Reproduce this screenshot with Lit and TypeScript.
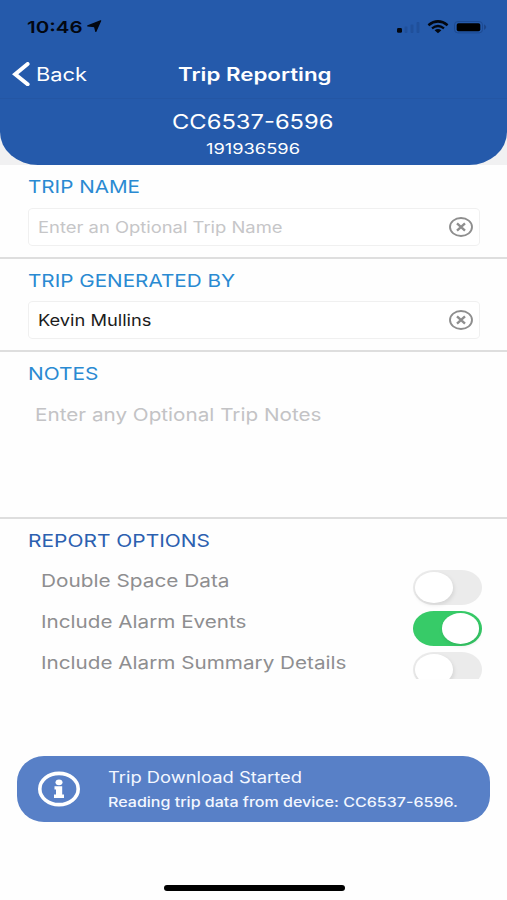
import { LitElement, html, css, svg } from "lit";
import { customElement, property, query } from "lit/decorators.js";

/** A single line of text set wide, stretched to an exact measure. */
@customElement("wide-text")
class WideText extends LitElement {
  @property({ type: Number }) measure = 100;
  @query(".run") run!: HTMLElement;

  static styles = css`
    :host {
      display: block;
      flex: none;
      white-space: nowrap;
    }
    .run {
      display: inline-block;
      transform-origin: 0 50%;
    }
  `;

  render() {
    return html`<span class="run"><slot></slot></span>`;
  }

  updated() {
    this.style.width = `${this.measure}px`;
    this.run.style.transform = "none";
    const natural = this.run.getBoundingClientRect().width;
    if (natural > 0) this.run.style.transform = `scaleX(${this.measure / natural})`;
  }
}

const clearIcon = svg`
  <svg class="clear" width="26" height="22" viewBox="0 0 26 22">
    <ellipse cx="13" cy="11" rx="11" ry="9" fill="none" stroke="#8e8e8e" stroke-width="1.9" />
    <path d="M9 7.4 17 14.6M17 7.4 9 14.6" stroke="#8e8e8e" stroke-width="2.4" />
  </svg>`;

@customElement("app-root")
class AppRoot extends LitElement {
  options = [
    { label: "Double Space Data", measure: 188.5, on: false },
    { label: "Include Alarm Events", measure: 205.5, on: true },
    { label: "Include Alarm Summary Details", measure: 305.5, on: false },
  ];

  static styles = css`
    :host {
      display: block;
      width: 507px;
      height: 900px;
      overflow: hidden;
      background: #fefefe;
      font-family: Inter, "Liberation Sans", sans-serif;
      font-size: 17.6px;
      line-height: 24px;
    }
    * {
      box-sizing: border-box;
    }
    .screen {
      display: flex;
      flex-direction: column;
      height: 900px;
    }
    .top {
      background: #f1f1f2;
      height: 165px;
    }
    header {
      height: 164.5px;
      background: #255aab;
      color: #fff;
      border-radius: 0 0 38px 38px / 0 0 33px 33px;
    }
    .status {
      height: 53px;
      display: flex;
      align-items: center;
      padding: 0 19px 0 27px;
      color: #030710;
      font-size: 16.6px;
      font-weight: 600;
    }
    .arrow {
      margin-left: 4px;
    }
    .signals {
      margin-left: auto;
    }
    .nav {
      height: 46px;
      padding: 0 12px 4px;
      border-bottom: 1px solid #2456a4;
      display: grid;
      grid-template-columns: 165.5px 1fr;
      align-items: center;
      font-size: 18.4px;
    }
    .back {
      display: flex;
      align-items: center;
      gap: 5.5px;
    }
    .title {
      font-weight: 600;
    }
    .device {
      height: 37px;
      padding-top: 8px;
      display: flex;
      align-items: center;
      justify-content: center;
      font-size: 19.8px;
    }
    .device,
    .serial {
      padding-right: 1px;
    }
    .serial {
      height: 25px;
      display: flex;
      align-items: center;
      justify-content: center;
      font-size: 14px;
    }
    section {
      border-bottom: 2px solid #dedede;
      padding: 0 27px 0 28px;
    }
    .heading {
      height: 42px;
      display: flex;
      align-items: center;
      color: #2a8ad2;
    }
    .name,
    .by {
      height: 93px;
    }
    .name {
      height: 94px;
    }
    .name .heading,
    .notes .heading {
      height: 43px;
    }
    .by .heading,
    .report .heading {
      padding-top: 1px;
    }
    .notes {
      height: 167px;
    }
    .report {
      border: 0;
      height: 160px;
      padding-right: 25px;
    }
    .report .heading {
      color: #2c60b0;
    }
    .field {
      height: 38px;
      border: 1px solid #f0f0f0;
      border-radius: 5px / 4px;
      display: flex;
      align-items: center;
      justify-content: space-between;
      padding: 1px 5px 0 8.5px;
      font-size: 15.8px;
      color: #1c1c1c;
      background: #fff;
    }
    .clear {
      margin-bottom: 1px;
    }
    .hint {
      color: #c6c6c8;
    }
    .memo {
      height: 40px;
      display: flex;
      align-items: center;
      padding-left: 6.5px;
      font-size: 17.8px;
      color: #c3c3c5;
    }
    .list {
      height: 118px;
      overflow: hidden;
    }
    .option {
      height: 41px;
      display: flex;
      justify-content: space-between;
      padding: 0 0 0 13px;
      line-height: 40px;
      color: #8e8e90;
    }
    .toggle {
      width: 69px;
      height: 34.5px;
      margin: 9px 0.5px 0 0;
      border-radius: 21px / 17.25px;
      padding: 2px 2.5px;
      background: #ebebeb;
      display: flex;
      flex: none;
    }
    .toggle.on {
      background: #37cb68;
      justify-content: flex-end;
    }
    .knob {
      width: 37.5px;
      height: 30.5px;
      border-radius: 50%;
      background: #fff;
      box-shadow: 1px 2px 4px rgba(0, 0, 0, 0.1);
    }
    .toast {
      height: 66px;
      margin: 77px 17px 0;
      border-radius: 27px / 26px;
      background: #5880c7;
      color: #f3f7ff;
      display: flex;
      padding-left: 20px;
      align-items: center;
    }
    .info {
      margin-bottom: 1px;
    }
    .message {
      margin-left: 27px;
      padding-top: 1px;
    }
    .lead {
      font-size: 15.8px;
    }
    .detail {
      font-size: 13.2px;
      font-weight: 450;
    }
    .home {
      width: 181px;
      height: 6px;
      border-radius: 3px;
      background: #000;
      margin: 63px 0 0 163.5px;
    }
  `;

  render() {
    return html`
      <div class="screen">
        <div class="top">
          <header>
            <div class="status">
              <wide-text measure="55.5">10:46</wide-text>
              <svg class="arrow" width="15" height="13" viewBox="0 0 15 13">
                <path d="M13.6 .8 8.8 11.4 7.6 6.5 .8 5.9Z" fill="#030710" stroke="#030710" stroke-width="1.3" stroke-linejoin="round" />
              </svg>
              <svg class="signals" width="93" height="16" viewBox="0 0 93 16">
                <rect x="2" y="9" width="5" height="4.8" rx="1.4" fill="#030710" />
                <g fill="#20509b">
                  <rect x="9.5" y="7.5" width="3" height="6.5" rx="1" />
                  <rect x="15.5" y="5.5" width="3" height="8.5" rx="1" />
                  <rect x="21.5" y="3" width="3" height="11" rx="1" />
                </g>
                <g fill="none" stroke="#030710">
                  <path d="M33.4 6.2Q43 -1.4 52.6 6.2" stroke-width="2.5" />
                  <path d="M37 9.3Q43 4.6 49 9.3" stroke-width="2.3" />
                </g>
                <path d="M39.6 11.2Q43 8.6 46.4 11.2L43 14.2Z" fill="#030710" />
                <rect x="59.5" y="2.5" width="28" height="11.4" rx="3.4" fill="none" stroke="#1d4a92" />
                <rect x="61.7" y="4.2" width="23.6" height="8" rx="1.8" fill="#000" />
                <path d="M89 5.2Q93.5 8 89 11Z" fill="#1d468a" />
              </svg>
            </div>
            <div class="nav">
              <div class="back">
                <svg width="18" height="24" viewBox="0 0 18 24">
                  <path d="M15.6 2 3.2 12.2 15.6 22.2" fill="none" stroke="#fff" stroke-width="4" stroke-linecap="round" stroke-linejoin="miter" />
                </svg>
                <wide-text measure="51">Back</wide-text>
              </div>
              <wide-text class="title" measure="153.5">Trip Reporting</wide-text>
            </div>
            <div class="device"><wide-text measure="161.5">CC6537-6596</wide-text></div>
            <div class="serial"><wide-text measure="94">191936596</wide-text></div>
          </header>
        </div>

        <section class="name">
          <div class="heading"><wide-text measure="112">TRIP NAME</wide-text></div>
          <div class="field hint">
            <wide-text measure="244.5">Enter an Optional Trip Name</wide-text>
            ${clearIcon}
          </div>
        </section>

        <section class="by">
          <div class="heading"><wide-text measure="207">TRIP GENERATED BY</wide-text></div>
          <div class="field">
            <wide-text measure="113.5">Kevin Mullins</wide-text>
            ${clearIcon}
          </div>
        </section>

        <section class="notes">
          <div class="heading"><wide-text measure="70.5">NOTES</wide-text></div>
          <div class="memo"><wide-text measure="286.5">Enter any Optional Trip Notes</wide-text></div>
        </section>

        <section class="report">
          <div class="heading"><wide-text measure="182">REPORT OPTIONS</wide-text></div>
          <div class="list">
            ${this.options.map(
              (o) => html`
                <div class="option">
                  <wide-text measure=${o.measure}>${o.label}</wide-text>
                  <div class="toggle ${o.on ? "on" : ""}"><div class="knob"></div></div>
                </div>
              `
            )}
          </div>
        </section>

        <div class="toast">
          <svg class="info" width="44" height="36" viewBox="0 0 44 36">
            <ellipse cx="22" cy="18" rx="19.2" ry="15.6" fill="none" stroke="#fff" stroke-width="3.6" />
            <ellipse cx="22" cy="11.3" rx="3.5" ry="2.9" fill="#fff" />
            <path d="M17.5 15.2H25.2V23.6H27V27H17V23.6H19V18.6H17.5Z" fill="#fff" />
          </svg>
          <div class="message">
            <wide-text class="lead" measure="194">Trip Download Started</wide-text>
            <wide-text class="detail" measure="350">Reading trip data from device: CC6537-6596.</wide-text>
          </div>
        </div>

        <div class="home"></div>
      </div>
    `;
  }
}
